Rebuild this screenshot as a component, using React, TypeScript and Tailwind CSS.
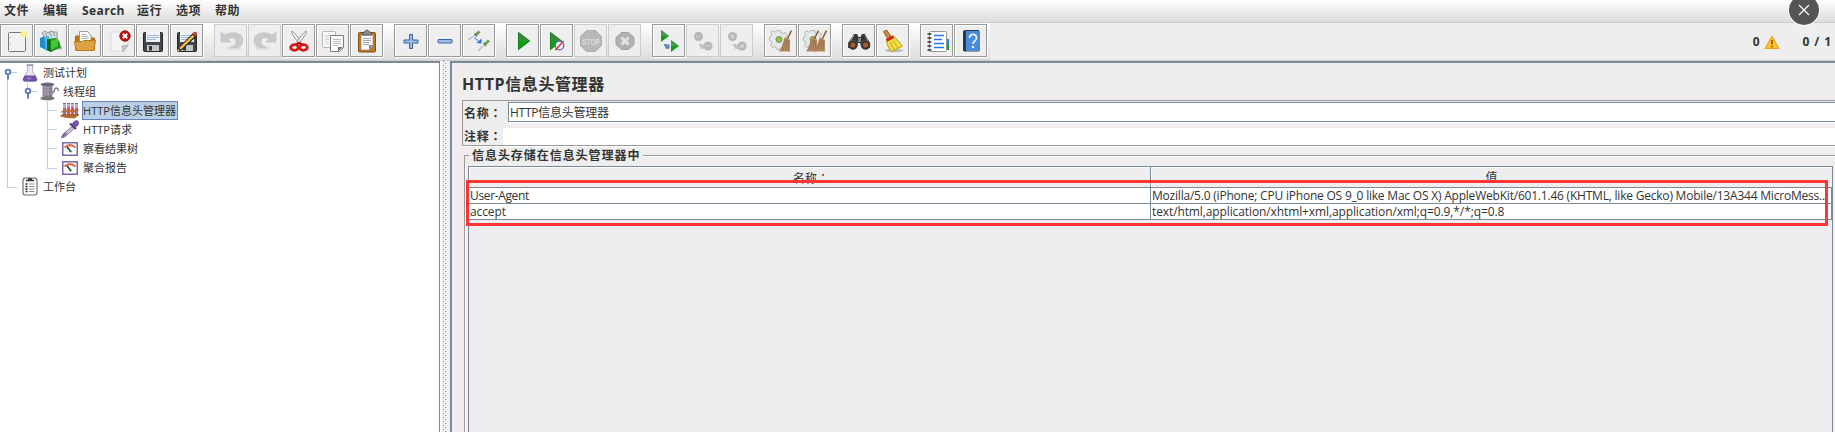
import React from "react";

type Kids = { children?: React.ReactNode };

const Svg = ({ children }: Kids) => (
  <svg width="24" height="24" viewBox="0 0 24 24" className="block shrink-0">
    {children}
  </svg>
);

const NewIcon = () => (
  <Svg>
    <rect x="3.5" y="3.5" width="17" height="19" rx="1" fill="#f1f1f1" stroke="#777" />
    <path d="M5.5 8v1M5.5 15v1" stroke="#aaa" />
    <circle cx="19" cy="5" r="3.4" fill="#fbf5a0" />
    <circle cx="19" cy="5" r="2" fill="#fffde0" stroke="#efe04c" />
  </Svg>
);
const TemplatesIcon = () => (
  <Svg>
    <path d="M3 4l3-2 3 2 3-2 3 1 3 0v12l-8 3z" fill="#d7dadb" stroke="#92999b" />
    <path d="M6 4l3 5M10 3l3 5M14 3l2 4" stroke="#8d9599" />
    <path d="M1 9l5-2 1 14-6-3z" fill="#1d8fc4" />
    <path d="M5 8l5-1 1 13-4 2z" fill="#4db4e4" />
    <path d="M8 10l9-1 3 3 2 6-10 5-4-2z" fill="#1f8d20" />
    <path d="M8 10l3 1 1 12-4-2z" fill="#0e6812" />
    <path d="M12 12l7-3v9l-7 3z" fill="#42c735" />
    <ellipse cx="19" cy="19" rx="4" ry="1.5" fill="#237d22" opacity=".5" />
  </Svg>
);
const OpenIcon = () => (
  <Svg>
    <path d="M2.500 7h6l1 2h12v12h-19z" fill="#b97710" stroke="#a7690a" />
    <path d="M6.500 2.500h8l3.500 4V14H6.500z" fill="#fafafa" stroke="#9b9b9b" />
    <path d="M8.500 5.500h5M8.500 7.500h7M8.500 9.500h7" stroke="#b7b7b7" />
    <path d="M1.500 12.500h8l1-1h12l-1.500 10h-18z" fill="#dda343" stroke="#b97a1c" />
  </Svg>
);
const CloseIcon = () => (
  <Svg>
    <path d="M4 3h17v14l-5 5H4z" fill="#f5f5f5" stroke="#dadada" />
    <path d="M21 16l-6 1 1 6z" fill="#c9c9c9" stroke="#999" strokeWidth=".6" />
    <circle cx="18" cy="7" r="5.2" fill="#c01313" stroke="#8b1616" />
    <path d="M15.8 4.8l4.4 4.4M20.2 4.8l-4.4 4.4" stroke="#fff" strokeWidth="2" />
  </Svg>
);
const DiskBody = () => (
  <>
    <rect x="2.5" y="3.5" width="19" height="19" rx="1" fill="#42464a" stroke="#25282a" />
    <rect x="5" y="3" width="14" height="10" fill="#eef3f8" />
    <path d="M6 6.5h12M6 8.5h12M6 10.5h9" stroke="#9db9d4" />
    <rect x="6" y="16" width="12" height="6" fill="#c3c7ca" />
    <rect x="8" y="17" width="3" height="4.5" fill="#33373a" />
  </>
);
const SaveIcon = () => (
  <Svg>
    <DiskBody />
  </Svg>
);
const SaveAsIcon = () => (
  <Svg>
    <DiskBody />
    <path d="M18 4l4 3L7 21l-5 2 2-5z" fill="#242424" />
    <path d="M17.5 6l2 1.5L6 20.5l-2-1.5z" fill="#f3bf35" />
    <path d="M17.5 5l1.5-2.5 3.5 2.5L21 7.5z" fill="#d74535" />
    <path d="M2 23l1-3 2 1.6z" fill="#eacb97" />
  </Svg>
);
const UndoArrow = () => (
  <>
    <ellipse cx="15" cy="19" rx="8" ry="2" fill="#dedede" />
    <path
      d="M2 3v10h10l-3-3c4-2.500 8-1 8 2.500 0 3-2 4.500-5 5.500 7 2 12-1 12-7C24 4 13 1.500 6 6z"
      fill="#c9c9c9"
      stroke="#bdbdbd"
      strokeWidth=".6"
    />
  </>
);
const UndoIcon = () => (
  <Svg>
    <UndoArrow />
  </Svg>
);
const RedoIcon = () => (
  <Svg>
    <g transform="translate(25 0) scale(-1 1)">
      <UndoArrow />
    </g>
  </Svg>
);
const CutIcon = () => (
  <Svg>
    <path d="M5 2c-1.500 3 5 9 7.500 13l1.500-2C11 8 8 4 5 2z" fill="#f2f2f2" stroke="#8d908c" />
    <path d="M19 2c1.500 3-5 9-7.500 13L10 13c3-5 6-9 9-11z" fill="#f2f2f2" stroke="#8d908c" />
    <ellipse cx="7.500" cy="18.500" rx="3.800" ry="2.800" fill="none" stroke="#d91616" strokeWidth="2.800" />
    <ellipse cx="16.500" cy="18.500" rx="3.800" ry="2.800" fill="none" stroke="#d91616" strokeWidth="2.800" />
    <path d="M9 15.500l3-1.500 3 1.500" stroke="#b60d0d" strokeWidth="2.400" fill="none" />
  </Svg>
);
const CopyIcon = () => (
  <Svg>
    <rect x="1.500" y="2.500" width="13" height="16" rx="1" fill="#f7f7f7" stroke="#b9b9b9" />
    <path d="M4 6.500h6M4 8.500h4M4 10.500h4M4 12.500h4M4 14.500h4" stroke="#d3d3d3" />
    <path d="M9.500 6.500h13v12l-4 4h-9z" fill="#fafafa" stroke="#7c7c7c" />
    <path d="M12 10.500h8M12 12.500h8M12 14.500h8M12 16.500h5" stroke="#bdbdbd" />
    <path d="M22 18h-5v4.500z" fill="#777" />
  </Svg>
);
const PasteIcon = () => (
  <Svg>
    <rect x="3.500" y="3.500" width="17" height="19.500" rx="1" fill="#b9792a" stroke="#84510f" />
    <path d="M6 6h12v11l-4 4H6z" fill="#f8f8f8" stroke="#93877a" strokeWidth=".7" />
    <path d="M8 9.500h8M8 11.500h8M8 13.500h6M8 15.500h6" stroke="#a9a9a9" />
    <path d="M18 16h-4v5z" fill="#8a8a86" />
    <path d="M7.500 6V3.500L10 3c0-2.500 4-2.500 4 0l2.500.5V6z" fill="#8b8e88" stroke="#555750" />
  </Svg>
);
const PlusIcon = () => (
  <Svg>
    <path
      d="M10.500 5.500h3v5.500h5.500v3h-5.500v5.500h-3V14H5v-3h5.500z"
      fill="#9dbde0"
      stroke="#3465a4"
      strokeLinejoin="round"
    />
  </Svg>
);
const MinusIcon = () => (
  <Svg>
    <rect x="5" y="10.500" width="14" height="3.500" rx=".5" fill="#9dbde0" stroke="#3465a4" />
  </Svg>
);
const ToggleIcon = () => (
  <Svg>
    <path d="M3 9.500l5-3" stroke="#c9cdd3" strokeWidth="2" />
    <path d="M8 6.500l4.500-4" stroke="#6d9c5b" strokeWidth="3" />
    <path d="M7.500 4.500l2.500 3" stroke="#6f7d68" strokeWidth="1.300" />
    <path d="M12.500 20l5-4" stroke="#c9cdd3" strokeWidth="2" />
    <path d="M17.500 15.500l4.500-4" stroke="#6d9c5b" strokeWidth="3" />
    <path d="M16.500 14l2.500 3" stroke="#6f7d68" strokeWidth="1.300" />
    <path d="M1.500 10.500l2-1.200M11.500 21.500l2-1.500" stroke="#888" />
    <path d="M7.500 9l4 3" stroke="#267fee" strokeWidth="1.400" strokeDasharray="1.600 .8" />
    <path d="M14.500 9.500v5l-5-.5z" fill="#1d74ee" />
  </Svg>
);
const PlayIcon = () => (
  <Svg>
    <path d="M7 3l12 9H7z" fill="#3a8b3f" />
    <path d="M7 12h12L7 21z" fill="#08a30c" />
    <path d="M7.500 3.500v17L18.500 12z" fill="none" stroke="#167a1c" />
  </Svg>
);
const PlayNoPauseIcon = () => (
  <Svg>
    <path d="M5 3l12 9H5z" fill="#3a8b3f" />
    <path d="M5 12h12L5 21z" fill="#08a30c" />
    <path d="M5.500 3.500v17L16.500 12z" fill="none" stroke="#167a1c" />
    <circle cx="14.500" cy="16.500" r="4.300" fill="#eef2f8" stroke="#4b77ae" strokeWidth="1.300" />
    <path d="M10.500 21l8-9" stroke="#d22d2d" strokeWidth="1.300" />
  </Svg>
);
const StopIcon = () => (
  <Svg>
    <path d="M7.500 1.500h9l6 6v9l-6 6h-9l-6-6v-9z" fill="#b9b9b9" stroke="#acacac" />
    <text
      x="12"
      y="15.500"
      textAnchor="middle"
      fontSize="9"
      fontWeight="700"
      textLength="18"
      lengthAdjust="spacingAndGlyphs"
      fill="#dadada"
      fontFamily="Liberation Sans"
    >
      STOP
    </text>
  </Svg>
);
const ShutdownIcon = () => (
  <Svg>
    <path d="M8.500 3.500h7l5.500 5v7l-5.500 5h-7L3 15.500v-7z" fill="#b2b2b2" stroke="#a2a2a2" />
    <path d="M8.500 8.500l7 7M15.500 8.500l-7 7" stroke="#e4e4e4" strokeWidth="3" />
  </Svg>
);
const RemoteArrow = ({ c }: { c: string }) => (
  <path d="M8 16l2-1 1.500 1.500L13 15.500v4l-3.500-.5 1-1z" fill={c} stroke={c} />
);
const RemoteStartIcon = () => (
  <Svg>
    <path d="M4 1l8 6-8 6z" fill="#159a1b" />
    <path d="M4 1l8 6H4z" fill="#4b9a4f" />
    <path d="M14 11l8 6-8 6z" fill="#159a1b" />
    <path d="M14 11l8 6h-8z" fill="#4b9a4f" />
    <g transform="translate(-1 0)">
      <RemoteArrow c="#5886b7" />
    </g>
  </Svg>
);
const RemoteStopIcon = () => (
  <Svg>
    <circle cx="7.500" cy="7.500" r="4.500" fill="#b6b6b6" />
    <circle cx="17" cy="17" r="4.500" fill="#b6b6b6" />
    <path d="M5 7.500h5M14.500 17h5" stroke="#cfcfcf" strokeWidth="2" strokeDasharray="1 .5" />
    <RemoteArrow c="#c2c2c2" />
  </Svg>
);
const RemoteShutdownIcon = () => (
  <Svg>
    <circle cx="7.500" cy="7.500" r="4.500" fill="#b6b6b6" />
    <circle cx="17" cy="17" r="4.500" fill="#b6b6b6" />
    <path d="M6 6l3 3M9 6l-3 3M15.500 15.500l3 3M18.500 15.500l-3 3" stroke="#dadada" strokeWidth="1.400" />
    <RemoteArrow c="#c2c2c2" />
  </Svg>
);
const Gear = () => (
  <>
    <path
      d="M8 1.500h3.500l.5 2.300 2 .9 2-1.300 2.400 2.400-1.300 2 .9 2 2.300.5v3.500l-2.300.5-.9 2 1.300 2-2.400 1-2-1-2 .9-.5 1.300H8l-.5-1.800-2-.9-2 .8L1.600 16l1.300-2-.9-2-1.500-.5V8L2 7.500l.9-2-1.300-2 1.900-1.600 2 1.300 2-.9z"
      fill="#e6e7e6"
      stroke="#adb0ad"
      strokeWidth=".9"
    />
    <circle cx="10" cy="10.500" r="3" fill="#7fcf35" stroke="#7f8a78" />
  </>
);
const Broom = () => (
  <>
    <path d="M22.500 1.500l-4.500 9" stroke="#8c5a2e" strokeWidth="1.500" />
    <path d="M15.500 8.500l5.500 2.500v11.500H10c2.500-3.500 4-8 5.500-14z" fill="#b99068" />
    <path d="M16.500 10l-5 12M17.500 11l-3.500 11M18.500 11l-2 11M20 11l-1 11" stroke="#8f6842" strokeWidth=".8" />
  </>
);
const ClearIcon = () => (
  <Svg>
    <Gear />
    <Broom />
  </Svg>
);
const ClearAllIcon = () => (
  <Svg>
    <Gear />
    <g transform="translate(-7 0)">
      <Broom />
    </g>
    <g transform="translate(1 0)">
      <Broom />
    </g>
  </Svg>
);
const SearchIcon = () => (
  <Svg>
    <path d="M7 5h3l1.500 3h2L15 5h3l5 9v5h-8l-2-5h-2l-2 5H1v-5z" fill="#343434" />
    <path d="M7 6l-4 7M18 6l3 6" stroke="#a9a9a9" />
    <circle cx="6" cy="16" r="4.500" fill="#2b2b2b" stroke="#666" strokeWidth=".7" />
    <circle cx="18.500" cy="16" r="4.500" fill="#2b2b2b" stroke="#666" strokeWidth=".7" />
    <circle cx="6" cy="16" r="2.700" fill="#a9572b" />
    <circle cx="18.500" cy="16" r="2.700" fill="#a9572b" />
    <rect x="11" y="9" width="3" height="4" fill="#888" />
  </Svg>
);
const ResetSearchIcon = () => (
  <Svg>
    <ellipse cx="13" cy="21.500" rx="9" ry="1.800" fill="#bdbdbd" />
    <path d="M2.500 2.500l3-1.500 5 7-3.500 2.500z" fill="#d08b43" stroke="#95571b" />
    <path d="M13 7.500l8.500 9.500-10.500 5.500c-2.500-2-5-6-5.500-10.500z" fill="#f4dc42" stroke="#b89a10" />
    <path d="M9 13l4.500 8M12 11.500l5 7.500" stroke="#c9a91c" />
    <path d="M5.500 11.500l7-4" stroke="#d81c1c" strokeWidth="3" />
  </Svg>
);
const FunctionIcon = () => (
  <Svg>
    <path d="M21 10h3v6h-3z" fill="#1d8bf0" />
    <path d="M21 16h3v5h-3z" fill="#1c9a1c" />
    <rect x="4.500" y="2.500" width="17" height="20" rx="1" fill="#fff" stroke="#999" />
    <path d="M2.500 5h4M2.500 9h4M2.500 13h4M2.500 17h4M2.500 21h4" stroke="#333" strokeWidth="1.600" />
    <path d="M9 6.500h10M9 10.500h8M9 14.500h10M9 18.500h10" stroke="#2477f2" strokeWidth="1.400" />
  </Svg>
);
const HelpIcon = () => (
  <Svg>
    <path d="M4 2l2-1h14v21H4z" fill="#24384e" />
    <rect x="7" y="2" width="14" height="20" fill="#4a8adb" />
    <path d="M5 22.500h15" stroke="#999" />
    <path d="M10.500 9c0-5 7-4.500 7 0 0 3-3.500 3-3.500 6" fill="none" stroke="#eef5ff" strokeWidth="1.700" />
    <circle cx="14" cy="18" r="1.200" fill="#eef5ff" />
  </Svg>
);

type Tool = { icon: React.FC; off?: boolean };
const groups: Tool[][] = [
  [{ icon: NewIcon }, { icon: TemplatesIcon }, { icon: OpenIcon }, { icon: CloseIcon }, { icon: SaveIcon }, { icon: SaveAsIcon }],
  [{ icon: UndoIcon, off: true }, { icon: RedoIcon, off: true }, { icon: CutIcon }, { icon: CopyIcon }, { icon: PasteIcon }],
  [{ icon: PlusIcon }, { icon: MinusIcon }, { icon: ToggleIcon }],
  [{ icon: PlayIcon }, { icon: PlayNoPauseIcon }, { icon: StopIcon, off: true }, { icon: ShutdownIcon, off: true }],
  [{ icon: RemoteStartIcon }, { icon: RemoteStopIcon, off: true }, { icon: RemoteShutdownIcon, off: true }],
  [{ icon: ClearIcon }, { icon: ClearAllIcon }],
  [{ icon: SearchIcon }, { icon: ResetSearchIcon }],
  [{ icon: FunctionIcon }, { icon: HelpIcon }],
];

const ToolButton = ({ icon: Icon, off }: Tool) => (
  <button
    className={
      off
        ? "flex size-[33px] items-center justify-center border border-[#cccccc] bg-[#eeeeee]"
        : "flex size-[33px] items-center justify-center border border-[#999999] bg-[#eeeeee] shadow-[inset_1px_1px_0_#fff,1px_1px_0_#fff]"
    }
  >
    <Icon />
  </button>
);

const FlaskIcon = () => (
  <svg width="16" height="18" viewBox="0 0 16 18">
    <path d="M5.500 1.500v6L1.500 14c-1 2 0 3.500 2 3.500h9c2 0 3-1.500 2-3.500l-4-6.500v-6z" fill="#eae8f0" stroke="#b3aebf" />
    <path d="M2.500 11.500h11l1.500 3.500c.4 1.500-.5 2.500-2 2.500H3c-1.500 0-2.400-1-2-2.500z" fill="#6f52a8" />
    <path d="M4.500 1h7" stroke="#9a95a6" strokeWidth="1.500" />
    <path d="M5 14.500h4" stroke="#a38fcd" strokeWidth="1.500" />
  </svg>
);
const SpoolIcon = () => (
  <svg width="19" height="19" viewBox="0 0 19 19">
    <path d="M2.500 3h10v12h-10z" fill="#918a98" />
    <path d="M5 4v12M8 4v12" stroke="#b9b3c0" strokeWidth="1.200" />
    <path d="M3 7h9M3 10h9M3 13h9" stroke="#7b7483" strokeWidth=".6" />
    <ellipse cx="7.500" cy="2.500" rx="7" ry="1.900" fill="#6c6575" />
    <ellipse cx="7.500" cy="16.300" rx="7.300" ry="2" fill="#77707f" />
    <path d="M12 11c3 0 1.500-5 4-5s2.500 2 2 3" fill="none" stroke="#777080" strokeWidth="1.300" />
  </svg>
);
const TubesIcon = () => (
  <svg width="20" height="18" viewBox="0 0 20 18" className="shrink-0">
    <path d="M4.500 2v12M8.500 2v12M12.500 2v12M16.500 2v12" stroke="#b9adcb" strokeWidth="3" />
    <path d="M4.500 6v9M16.500 6v8" stroke="#8266b5" strokeWidth="2.400" />
    <path d="M8.500 5v10M12.500 5v10" stroke="#d8475e" strokeWidth="2.400" />
    <path d="M3 1.500h3M7 1.500h3M11 1.500h3M15 1.500h3" stroke="#77708a" />
    <path d="M0 10.500L4 7.500h15.500l-3.500 3z" fill="#b46a35" opacity=".85" />
    <path d="M.5 14l2-1.500h16.500l-4.500 3.500-8-.5z" fill="#b46a35" stroke="#99531f" strokeWidth=".7" />
  </svg>
);
const DropperIcon = () => (
  <svg width="19" height="19" viewBox="0 0 19 19">
    <path d="M1.500 18l1.500-4 9-7.500 2 2-8.500 8z" fill="#cbbfdb" stroke="#83798f" strokeWidth=".9" />
    <path d="M2.500 17l4-4" stroke="#7a5ea8" strokeWidth="1.800" />
    <path d="M10 3.500l6 5.500" stroke="#4b3a78" strokeWidth="2.200" />
    <path d="M12.500 5c0-3 4-5.500 5.500-3.500s-1 5.500-3.500 5.500z" fill="#7458ad" stroke="#5b4193" />
  </svg>
);
const GaugeIcon = () => (
  <svg width="16" height="14" viewBox="0 0 16 14">
    <rect x=".75" y=".75" width="14.500" height="12.500" fill="#fff" stroke="#7a66a8" strokeWidth="1.500" />
    <path d="M2.500 5.500c3.500-3 7.500-3 11 0" fill="none" stroke="#dd6a4c" strokeWidth="2" />
    <path d="M5 5l3.500 4" stroke="#222" strokeWidth="1.300" />
    <circle cx="8.500" cy="9.300" r="1.200" fill="#238b34" />
  </svg>
);
const ClipboardIcon = () => (
  <svg width="16" height="19" viewBox="0 0 16 19">
    <rect x="1" y="1" width="14" height="17" rx="2.500" fill="#fff" stroke="#666" strokeWidth="1.100" />
    <path d="M4 3.500h8M6 2h4" stroke="#333" strokeWidth="1.600" />
    <path d="M3.500 7h2M3.500 9.500h2M3.500 12h2M3.500 14.500h2" stroke="#222" strokeWidth="1.400" />
    <path d="M7 7h5.500M7 9.500h5.500M7 12h5.500M7 14.500h5.500" stroke="#888" strokeWidth="1.200" />
  </svg>
);

const TreeLines = () => (
  <svg width="62" height="150" viewBox="0 0 62 150" className="absolute top-0 left-0" shapeRendering="crispEdges">
    <path
      d="M7.500 14v110.500H17M8 9.500h9M27.500 18v10M28 28.500h9M47.500 38v67.500H57M48 47.500h9M48 66.500h9M48 85.500h9"
      fill="none"
      stroke="#b8cfe5"
    />
    <g shapeRendering="auto" fill="none" stroke="#6382bf" strokeWidth="2">
      <circle cx="8" cy="9" r="2.300" fill="#fff" />
      <path d="M8 11.500v5" />
      <circle cx="28" cy="28" r="2.300" fill="#fff" />
      <path d="M28 30.500v5" />
    </g>
  </svg>
);

type Row = { label: string; icon: React.FC; box: string; selected?: boolean };
const rows: Row[] = [
  { label: "测试计划", icon: FlaskIcon, box: "ml-[20px] w-[19px]" },
  { label: "线程组", icon: SpoolIcon, box: "ml-[40px] w-[19px]" },
  { label: "HTTP信息头管理器", icon: TubesIcon, box: "ml-[60px] w-[19px]", selected: true },
  { label: "HTTP请求", icon: DropperIcon, box: "ml-[60px] w-[19px]" },
  { label: "察看结果树", icon: GaugeIcon, box: "ml-[60px] w-[19px]" },
  { label: "聚合报告", icon: GaugeIcon, box: "ml-[60px] w-[19px]" },
  { label: "工作台", icon: ClipboardIcon, box: "ml-[20px] w-[19px]" },
];

const Colon = () => <span className="font-['Noto_Sans_CJK_TC',sans-serif]">：</span>;
const Label = ({ children }: Kids) => (
  <span className="text-[12px] font-bold tracking-[0.8px] whitespace-nowrap">
    {children}
    <Colon />
  </span>
);

export default function App() {
  return (
    <div className="relative flex h-[432px] w-[1835px] flex-col overflow-hidden bg-[#eeeeee] font-['Open_Sans','Noto_Sans_CJK_SC',sans-serif] text-[#333333]">
      <nav className="flex h-[23px] shrink-0 items-center border-b border-[#cccccc] bg-linear-to-b from-white to-[#dcdcdc] pl-[4px] text-[12px] leading-none font-bold whitespace-nowrap">
        <span className="w-[39px] tracking-[0.6px]">文件</span>
        <span className="w-[39px] tracking-[0.6px]">编辑</span>
        <span className="w-[55px] tracking-[0.4px]">Search</span>
        <span className="w-[39px] tracking-[0.6px]">运行</span>
        <span className="w-[39px] tracking-[0.6px]">选项</span>
        <span className="tracking-[0.6px]">帮助</span>
      </nav>

      <header className="flex h-[38px] shrink-0 border-b border-[#cccccc]">
        <div className="flex w-[990px] shrink-0 gap-[11px] bg-linear-to-b from-white to-[#dddddd] pt-px">
          {groups.map((g, i) => (
            <div key={i} className="flex gap-px">
              {g.map((t, j) => (
                <ToolButton key={j} {...t} />
              ))}
            </div>
          ))}
        </div>
        <div className="flex flex-1 items-center justify-end pt-px pr-[3px] text-[12px] font-bold">
          <span>0</span>
          <svg width="16" height="15" viewBox="0 0 16 15" className="mr-[23px] ml-[4px]">
            <path d="M8 1.500L15 13.500H1z" fill="#fbc52d" stroke="#f3a01c" strokeWidth="1.200" strokeLinejoin="round" />
            <path d="M8 5v4.500M8 10.800v1.600" stroke="#a14a08" strokeWidth="1.600" />
          </svg>
          <span className="tracking-[0.9px]">0 / 1</span>
        </div>
      </header>

      <main className="flex min-h-0 flex-1">
        <aside className="relative flex w-[440px] shrink-0 flex-col border-t-2 border-r border-[#7a8a99] bg-white text-[11px] leading-none">
          <TreeLines />
          {rows.map(({ label, icon: Icon, box, selected }) => (
            <div key={label} className="flex h-[19px] items-center">
              <span className={`${box} flex shrink-0 items-center justify-center`}>
                <Icon />
              </span>
              <span
                className={
                  selected
                    ? "ml-[3px] flex h-[19px] w-[96px] items-center border border-[#6382bf] bg-[#b8cfe5] tracking-[0.03px] whitespace-nowrap"
                    : "ml-[4px] tracking-[0.03px] whitespace-nowrap"
                }
              >
                {label}
              </span>
            </div>
          ))}
        </aside>

        <div className="flex w-[10px] shrink-0 justify-end border-l-2 border-white">
          <svg width="6" height="371" className="mr-px" shapeRendering="crispEdges">
            <defs>
              <pattern id="bumps" width="4" height="4" patternUnits="userSpaceOnUse">
                <rect x="0" y="0" width="1" height="1" fill="#7a8a99" />
                <rect x="2" y="2" width="1" height="1" fill="#7a8a99" />
                <rect x="1" y="1" width="1" height="1" fill="#fff" />
                <rect x="3" y="3" width="1" height="1" fill="#fff" />
              </pattern>
            </defs>
            <rect width="4" height="371" fill="url(#bumps)" />
          </svg>
        </div>

        <section className="flex min-w-0 flex-1 flex-col border-t-2 border-l-2 border-[#7a8a99] pl-[10px]">
          <h1 className="flex h-[37px] items-center pt-[5px] text-[16px] leading-none font-bold tracking-[0.6px]">
            HTTP信息头管理器
          </h1>

          <div className="flex h-[46px] shrink-0 flex-col border-y border-l border-[#999999] leading-none shadow-[0_1px_0_#fff]">
            <div className="flex h-[22px] shrink-0 pt-px">
              <div className="flex w-[45px] shrink-0 items-center pt-px pl-px">
                <Label>名称</Label>
              </div>
              <div className="flex h-[20px] flex-1 items-center border-y border-l border-[#7a8a99] bg-white pt-px pl-px text-[12px] tracking-[-0.25px] shadow-[0_1px_0_#fff]">
                HTTP信息头管理器
              </div>
            </div>
            <div className="flex flex-1 pt-[5px]">
              <div className="flex w-[40px] shrink-0 items-center pl-px">
                <Label>注释</Label>
              </div>
              <div className="flex-1 bg-white" />
            </div>
          </div>

          <div className="mt-px flex flex-1 flex-col pl-[2px]">
            <div className="flex h-[18px] shrink-0 items-start">
              <span className="mt-[8px] h-[10px] w-[5px] border-t border-l border-[#999999]" />
              <span className="px-[3px] pt-[3px] text-[12px] leading-none font-bold whitespace-nowrap tracking-[0.95px]">
                信息头存储在信息头管理器中
              </span>
              <span className="mt-[8px] h-px flex-1 bg-[#999999] shadow-[0_1px_0_#fff]" />
            </div>
            <div className="flex flex-1 border-l border-[#999999] pl-[3px] shadow-[inset_1px_0_0_#fff]">
              <div className="mt-px flex w-[1365px] flex-col border-t border-r border-l border-[#7a8a99] text-[12px]">
                <div className="flex h-[21px] border-b border-[#7a8a99] text-center leading-[21px] shadow-[inset_1px_1px_0_#fff]">
                  <div className="w-[682px] shrink-0 border-r border-[#7a8a99] pl-[3px]">
                    名称
                    <Colon />
                  </div>
                  <div className="flex-1 shadow-[inset_1px_1px_0_#fff]">值</div>
                </div>
                <div className="flex h-[16px] border-r border-b border-[#7a8a99] bg-white leading-[16px]">
                  <div className="w-[682px] shrink-0 border-r border-[#7a8a99] pl-px tracking-[-0.35px]">User-Agent</div>
                  <div className="min-w-0 flex-1 pl-px tracking-[-0.21px] whitespace-nowrap">
                    Mozilla/5.0 (iPhone; CPU iPhone OS 9_0 like Mac OS X) AppleWebKit/601.1.46 (KHTML, like Gecko) Mobile/13A344 MicroMess...
                  </div>
                </div>
                <div className="flex h-[16px] border-r border-b border-[#7a8a99] bg-white leading-[16px]">
                  <div className="w-[682px] shrink-0 border-r border-[#7a8a99] pl-px tracking-[-0.1px]">accept</div>
                  <div className="flex-1 pl-px tracking-[-0.11px] whitespace-nowrap">
                    text/html,application/xhtml+xml,application/xml;q=0.9,*/*;q=0.8
                  </div>
                </div>
              </div>
            </div>
          </div>
        </section>
      </main>

      <div className="absolute top-[180px] left-[466px] h-[46px] w-[1362px] border-[3px] border-[#ff3535]" />
      <div className="absolute -top-[5px] left-[1789px] flex size-[30px] items-center justify-center rounded-full bg-[#555555] shadow-[0_0_0_1px_#fff]">
        <svg width="12" height="12" viewBox="0 0 12 12">
          <path d="M1 1l10 10M11 1L1 11" stroke="#fff" strokeWidth="1.200" />
        </svg>
      </div>
    </div>
  );
}
